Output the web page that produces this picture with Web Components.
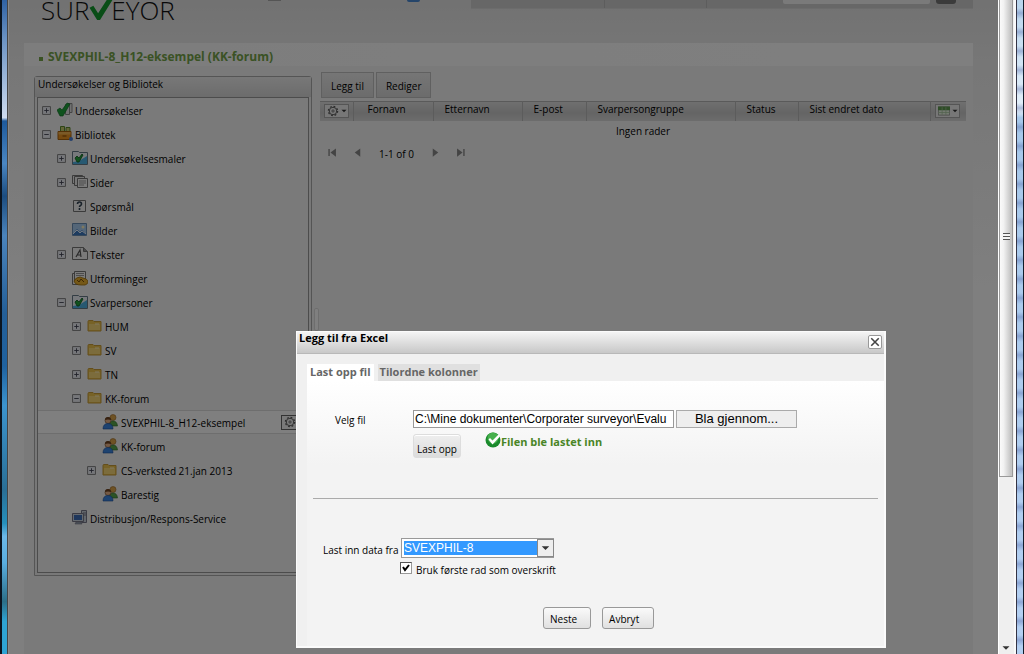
<!DOCTYPE html>
<html lang="no">
<head>
<meta charset="utf-8">
<title>Surveyor – Legg til fra Excel</title>
<style>
  html { background: #808080; }
  body {
    margin: 0;
    font: 10px/12px "Open Sans", "Noto Sans", sans-serif;
    color: #000;
  }
</style>
</head>
<body>
<window-frame>
  <survey-page>
    <brand-header slot="header"></brand-header>
    <page-title slot="title">SVEXPHIL-8_H12-eksempel (KK-forum)</page-title>
    <library-panel slot="side" heading="Undersøkelser og Bibliotek">
      <tree-item depth="0" state="closed" icon="surveys">Undersøkelser</tree-item>
      <tree-item depth="0" state="open" icon="library">Bibliotek</tree-item>
      <tree-item depth="1" state="closed" icon="template">Undersøkelsesmaler</tree-item>
      <tree-item depth="1" state="closed" icon="pages">Sider</tree-item>
      <tree-item depth="1" icon="question">Spørsmål</tree-item>
      <tree-item depth="1" icon="image">Bilder</tree-item>
      <tree-item depth="1" state="closed" icon="text">Tekster</tree-item>
      <tree-item depth="1" icon="design">Utforminger</tree-item>
      <tree-item depth="1" state="open" icon="template">Svarpersoner</tree-item>
      <tree-item depth="2" state="closed" icon="folder">HUM</tree-item>
      <tree-item depth="2" state="closed" icon="folder">SV</tree-item>
      <tree-item depth="2" state="closed" icon="folder">TN</tree-item>
      <tree-item depth="2" state="open" icon="folder">KK-forum</tree-item>
      <tree-item depth="3" icon="people" selected>SVEXPHIL-8_H12-eksempel</tree-item>
      <tree-item depth="3" icon="people">KK-forum</tree-item>
      <tree-item depth="3" state="closed" icon="folder">CS-verksted 21.jan 2013</tree-item>
      <tree-item depth="3" icon="people">Barestig</tree-item>
      <tree-item depth="1" icon="server">Distribusjon/Respons-Service</tree-item>
    </library-panel>
    <respondent-list slot="main"></respondent-list>
    <import-dialog slot="dialog" heading="Legg til fra Excel"></import-dialog>
  </survey-page>
</window-frame>

<script>
const define = (tag, html, setup) => {
  const template = document.createElement('template');
  template.innerHTML = '<style>:host{display:block;box-sizing:border-box}*{box-sizing:border-box}button,input,select{font:inherit;color:inherit;margin:0}</style>' + html;
  customElements.define(tag, class extends HTMLElement {
    constructor() {
      super();
      this.attachShadow({ mode: 'open' }).append(template.content.cloneNode(true));
    }
    connectedCallback() { if (setup) setup(this, this.shadowRoot); }
  });
};

const icons = {
  surveys: '<path d="M8.500 2.500h4v10h-4zM11 1.500h4v9h-2" fill="#e4e4e4" stroke="#888"/><path d="M0 8l3-2 2 2 5-7 3 1-7 12H3z" fill="#1fa53a" stroke="#0a6420" stroke-width=".6"/>',
  library: '<path d="M3.500 .5h4v5h-4zM9 1.500h4v5H9z" fill="#c8cc70" stroke="#5c8a2c"/><path d="M1 5.500h13v8H1z" fill="#ec9420" stroke="#a8620c"/><path d="M1.500 6h12v2.500h-12z" fill="#f7b44e"/><path d="M5.500 10h4" stroke="#804500"/><circle cx="14" cy="13" r="2" fill="#4a80d8"/>',
  template: '<path d="M.5 1.500h6l1 1h8v12H.5z" fill="#eef3f8" stroke="#667a88"/><path d="M1 14v-2l6-1 8-5v8z" fill="#4eb2e4"/><path d="M3 8l2-2 2 2 3-4 1 1-4 7H5z" fill="#22a23a" stroke="#0c5a1e" stroke-width=".8"/>',
  pages: '<path d="M.5 1.500h10v8H.5z" fill="#eee" stroke="#777"/><path d="M2.500 2.500h10v9h-10z" fill="#eee" stroke="#777"/><path d="M5.500 4.500h10v9h-10z" fill="#f4f4f4" stroke="#777"/><path d="M7 7h7M7 9h7M7 11h5" stroke="#999"/>',
  question: '<path d="M1.500 2.500h12v11h-12z" fill="#f4f4f4" stroke="#777"/><path d="M5.500 6q0-2 2-2t2 2q0 1-1 1.500t-1 1.500M7.500 10v2" fill="none" stroke="#345" stroke-width="1.600"/>',
  image: '<path d="M.5 1.500h14v12H.5z" fill="#a8cdf0" stroke="#6b8fb4"/><path d="M1 12l4-5 3 3 2-2 4 4v1H1z" fill="#3d78c0"/><path d="M1 12l4-4 3 3 2-2 4 3" fill="none" stroke="#e8f2ff"/><circle cx="11" cy="5" r="1.500" fill="#fff3c0"/>',
  text: '<path d="M.5 1.500h11l4 4v8H.5z" fill="#f4f4f4" stroke="#777"/><path d="M11.500 1.500v4h4" fill="#999" stroke="#777"/><path d="M4 11l4-7 1 7M5.500 9H9" fill="none" stroke="#555" stroke-width="1.200"/>',
  design: '<path d="M.5 3.500h10v11H.5z" fill="#f0f0f0" stroke="#777"/><path d="M2.500 1.500h11v10h-11z" fill="#f6f6f6" stroke="#777"/><path d="M4 3.500h8M4 5.500h8" stroke="#999"/><path d="M2 11q2-4 6-4l6 2q2 1 2 3t-3 3H9q-6 0-7-4z" fill="#eab02e" stroke="#a0700c" stroke-width=".8"/><path d="M5 10l2 2 2-3 3 3" fill="none" stroke="#7a4d08"/>',
  folder: '<path d="M1 3.500q0-1 1-1h4l1 1h7v9.500H1z" fill="#efc44e" stroke="#c89c38"/><path d="M2 6h11v6H2z" fill="#f8d878"/><path d="M8 6h4" stroke="#fff2c4"/>',
  people: '<circle cx="11" cy="3.500" r="3" fill="#dca448" stroke="#9c6a28" stroke-width=".6"/><path d="M7 12q0-5 4-5t4.500 5z" fill="#58a64a" stroke="#2f6f28" stroke-width=".6"/><circle cx="6" cy="6.500" r="3" fill="#e8b48a" stroke="#6d4320" stroke-width=".6"/><path d="M3 6q0-3 3-3t3 3q-3-1-6 0z" fill="#6d4320"/><path d="M1 15q0-5.500 5-5.500t5 5.500z" fill="#3c86e0" stroke="#1c4f9c" stroke-width=".6"/>',
  server: '<path d="M9.500 .5h5v12h-5z" fill="#c6ced8" stroke="#778"/><path d="M11 3h3M11 5h3" stroke="#778"/><path d="M.5 3.500h11v8H.5z" fill="#c8d2de" stroke="#778"/><path d="M2 5h8v5H2z" fill="#3f6eb8"/><path d="M3 14h7l-1-2H4z" fill="#99a4b4" stroke="#778" stroke-width=".6"/>',
  gear: '<circle cx="8" cy="8" r="5" fill="none" stroke="#555" stroke-width="1.200"/><circle cx="8" cy="8" r="6.200" fill="none" stroke="#555" stroke-width="1.600" stroke-dasharray="2.400 2.470"/><circle cx="8" cy="8" r="1.500" fill="none" stroke="#555"/>',
  grid: '<path d="M.5 2.500h15v11H.5z" fill="#e8f4e2" stroke="#888"/><path d="M0 2h16v5H0z" fill="#5f9a50"/><path d="M0 10h16M5.500 3v10M10.500 3v10" stroke="#a4c49c"/>',
  caret: '<path d="M4 6h8l-4 4z" fill="#333"/>',
  first: '<path d="M3 3v10" stroke="#888" stroke-width="2"/><path d="M13 2v12L5 8z" fill="#888"/>',
  prev: '<path d="M12 2v12L4 8z" fill="#888"/>',
  next: '<path d="M4 2v12l8-6z" fill="#888"/>',
  last: '<path d="M13 3v10" stroke="#888" stroke-width="2"/><path d="M3 2v12l8-6z" fill="#888"/>',
  close: '<path d="M2 2l12 12M14 2L2 14" stroke="#444" stroke-width="2.500"/>',
  ok: '<circle cx="8" cy="8" r="7.500" fill="#1a8a2c"/><circle cx="8" cy="6" r="5.500" fill="#46b04c"/><path d="M3.500 7.500l1.500-1.500 2.500 2.500 6-6 1.500 2-7.500 8z" fill="#fff"/>',
  plus: '<path d="M1 1h14v14H1z" fill="#eceff4" stroke="#777" stroke-width="1.600"/><path d="M4 8h8M8 4v8" stroke="#445" stroke-width="1.600"/>',
  minus: '<path d="M1 1h14v14H1z" fill="#eceff4" stroke="#777" stroke-width="1.600"/><path d="M4 8h8" stroke="#445" stroke-width="1.600"/>'
};

define('ui-icon', `
  <style>:host{display:inline-block;width:16px;height:16px;flex:none}svg{display:block;width:100%;height:100%}</style>
  <svg viewBox="0 0 16 16" aria-hidden="true"></svg>`,
  (host, root) => { root.querySelector('svg').innerHTML = icons[host.getAttribute('name')] || ''; });

define('window-frame', `
  <style>
    :host{display:flex;height:100vh;overflow:hidden}
    .left{flex:none;width:9px;border-left:2px solid #0a1420;border-right:1px solid #888;
      background:linear-gradient(90deg,transparent 5px,#444 5px),
      linear-gradient(#2f62a4,#6b93c4 6%,#c6d6ec 17%,#cfdcf0 18%,#1e5a9c 18.500%,#4a86c2 25%,#1c4d80 30%,#4b84bc 36%,#245f98 48%,#1f62a0 56%,#3c94ce 62%,#2a6f96 75%,#2690bc 80%,#6cb8e8 82%,#5aaee0 86%,#2c6f88 92%,#2fa4d4 95%)}
    main{flex:1;min-width:0}
    .bar{flex:none;width:18px;background:#efefef;border-left:1px solid #fff;border-right:2px solid #fafafa;display:flex;flex-direction:column;justify-content:space-between}
    .thumb{height:73%;border:1px solid #999;border-top:0;margin-right:1px;padding-bottom:4px;background:linear-gradient(90deg,#fafafa,#f2f2f2 30%,#c4c4c4 90%);display:flex;align-items:center;justify-content:center}
    .grip{width:7px;height:7px;background:repeating-linear-gradient(#555 0 1px,#f4f4f4 1px 3px)}
    .bar ui-icon{width:14px;height:14px;margin-bottom:-1px}
    .right{flex:none;width:8px;border-left:1px solid #334;border-right:1px solid #101c28;
      background:repeating-linear-gradient(transparent 0 8px,rgba(70,90,160,.35) 13px,transparent 19px),linear-gradient(#b8d4ec,#e4f0fa 17%,#a6c8ea 18%,#b4d0f2)}
  </style>
  <div class="left"></div>
  <main><slot></slot></main>
  <div class="bar"><div class="thumb"><div class="grip"></div></div><ui-icon name="caret"></ui-icon></div>
  <div class="right"></div>`);

define('survey-page', `
  <style>
    :host{position:relative;height:100%;overflow:hidden;padding:0 25px 0 15px;background:linear-gradient(#e4e4e4,#eee 60px,#fff 300px)}
    .sheet{display:flex;flex-direction:column;height:100%}
    .body{flex:1;display:flex;gap:2px;background:#f4f4f4;padding:6px 7px 0 10px}
    .side{flex:none;width:278px;padding-top:4px}
    .split{flex:none;align-self:flex-start;width:5px;height:23px;margin-top:236px;border:1px solid #ddd;border-radius:2px;background:#fff}
    .main{flex:1;min-width:0}
    .shade{position:absolute;inset:0;background:rgba(0,0,0,.5)}
    .dialog{position:absolute;left:287px;right:112px;bottom:6px}
  </style>
  <div class="sheet">
    <slot name="header"></slot>
    <slot name="title"></slot>
    <div class="body">
      <div class="side"><slot name="side"></slot></div>
      <div class="split"></div>
      <div class="main"><slot name="main"></slot></div>
    </div>
  </div>
  <div class="shade"></div>
  <div class="dialog"><slot name="dialog"></slot></div>`);

define('brand-header', `
  <style>
    :host{display:flex;align-items:flex-start;flex:none;height:43px;padding-left:17px}
    .logo{display:flex;align-items:flex-start;flex:none;margin-right:auto;font-size:26px;line-height:20px;font-weight:300;color:#111}
    .logo svg{width:25px;height:21px;margin:0 -2px 0 -1px}
    .marks{display:flex;gap:126px;flex:none;width:171px;margin-right:32px}
    .marks i{width:13px;height:1px;background:#aaa}
    .marks i+i{background:#4a8ad4;height:2px;border-radius:0 0 5px 5px}
    nav{display:flex;justify-content:flex-end;gap:6px;width:502px;height:9px;padding-right:17px;background:#cfcfcf;border-bottom:1px solid #d8d8d8}
    input{width:147px;height:4px;padding:0;border:0;background:#f4f4f4;border-radius:0 0 2px 2px}
    button{width:20px;height:4px;padding:0;border:0;background:#777;border-radius:0 0 3px 3px}
    .sep{width:1px;background:#bbb;margin-right:95px}
    .sep+.sep{margin-right:70px}
  </style>
  <div class="logo"><span>SUR</span><svg viewBox="0 0 25 22" aria-hidden="true"><path d="M1 8l4-2 5 8L19 0h6L12 21H9z" fill="#129a2c"/></svg><span>EYOR</span></div>
  <div class="marks"><i></i><i></i></div>
  <nav><span class="sep"></span><span class="sep"></span><input aria-label="Søk"><button aria-label="Søk"></button></nav>`);

define('page-title', `
  <style>
    :host{flex:none;background:linear-gradient(90deg,#fafafa,#fff)}
    h1{display:flex;align-items:center;gap:5px;height:23px;margin:0;padding:4px 0 0 15px;font-size:12px;line-height:16px;font-weight:700;color:#74a448}
    i{width:4px;height:4px;margin-top:4px;background:#74a448}
  </style>
  <h1><i></i><span><slot></slot></span></h1>`);

define('library-panel', `
  <style>
    section{border:1px solid #aaa;border-radius:3px 3px 0 0;padding:0 2px 2px;background:#f0f0f0}
    h2{margin:0 -2px;padding:0 3px;height:20px;font-size:10px;line-height:14px;font-weight:400;background:linear-gradient(#f0f0f0,#d8d8d8)}
    .tree{border:1px solid #999;height:476px;background:#f4f4f4}
  </style>
  <section><h2></h2><div class="tree" role="tree"><slot></slot></div></section>`,
  (host, root) => { root.querySelector('h2').textContent = host.getAttribute('heading'); });

define('tree-item', `
  <style>
    .row{display:flex;align-items:center;height:24px;padding-left:calc(4px + var(--depth) * 15px)}
    :host([selected]) .row{background:#fff;box-shadow:inset 0 1px #ddd,inset 0 -1px #ddd}
    .toggle{width:9px;height:9px;padding:0;border:0;background:none;margin-right:6px}
    .toggle ui-icon{display:block;width:9px;height:9px}
    .label{margin-left:2px;padding-top:2px;white-space:nowrap}
    :host([depth="3"]) .label{margin-left:3px}
    .menu{display:none;margin:0 3px 0 auto;width:24px;height:15px;padding:0;border:1px solid #666;background:#f4f4f4;align-items:center}
    .menu ui-icon{width:12px;height:12px;margin-left:2px}
    :host([selected]) .menu{display:flex}
  </style>
  <div class="row"><button class="toggle" aria-label="Vis"></button><ui-icon class="pic"></ui-icon><span class="label"><slot></slot></span><button class="menu" aria-label="Handlinger"><ui-icon name="gear"></ui-icon></button></div>`,
  (host, root) => {
    host.setAttribute('role', 'treeitem');
    root.querySelector('.row').style.setProperty('--depth', host.getAttribute('depth'));
    const pic = document.createElement('ui-icon');
    pic.setAttribute('name', host.getAttribute('icon'));
    root.querySelector('.pic').replaceWith(pic);
    const toggle = root.querySelector('.toggle');
    const state = host.getAttribute('state');
    if (state) {
      const sign = document.createElement('ui-icon');
      sign.setAttribute('name', state === 'open' ? 'minus' : 'plus');
      toggle.append(sign);
    } else {
      toggle.style.visibility = 'hidden';
    }
  });

define('respondent-list', `
  <style>
    :host{margin-left:-1px}
    .tools{display:flex;gap:2px;padding-left:1px;margin-bottom:3px}
    .tools button{height:26px;padding:2px 9px 0;border:1px solid #c0c0c0;background:linear-gradient(#ececec,#d8d8d8)}
    table{width:100%;border-collapse:collapse;table-layout:fixed}
    thead tr{height:20px;background:linear-gradient(#e2e2e2,#cacaca 60%,#dadada);box-shadow:inset 0 1px #b4b4b4}
    th{padding:0 0 4px 11px;font-weight:400;text-align:left;white-space:nowrap;border-right:1px solid #b8b8b8}
    th:last-child{border-right:0}
    th:nth-child(2){padding-left:14px}
    th.act{padding:0 0 0 4px}
    .act button{display:flex;align-items:center;width:25px;height:14px;padding:0 2px;border:1px solid #aaa;background:#eee}
    .act ui-icon{width:12px;height:12px}
    .act ui-icon+ui-icon{width:10px;height:10px;margin-right:-2px}
    td{height:20px;padding:0;text-align:center}
    .pager{display:flex;align-items:center;height:22px;padding-left:6px}
    .pager button{width:14px;height:14px;padding:1px;border:0;background:none}
    .pager ui-icon{display:block;width:11px;height:11px}
    .pager button+button{margin-left:11px}
    .pager span{padding:4px 15px 0 14px}
  </style>
  <div class="tools"><button>Legg til</button><button>Rediger</button></div>
  <table>
    <colgroup><col style="width:33px"><col style="width:80px"><col style="width:89px"><col style="width:64px"><col><col style="width:63px"><col style="width:132px"><col style="width:36px"></colgroup>
    <thead><tr>
      <th class="act"><button aria-label="Handlinger"><ui-icon name="gear"></ui-icon><ui-icon name="caret"></ui-icon></button></th>
      <th>Fornavn</th><th>Etternavn</th><th>E-post</th><th>Svarpersongruppe</th><th>Status</th><th>Sist endret dato</th>
      <th class="act"><button aria-label="Kolonner"><ui-icon name="grid"></ui-icon><ui-icon name="caret"></ui-icon></button></th>
    </tr></thead>
    <tbody><tr><td colspan="8">Ingen rader</td></tr></tbody>
  </table>
  <div class="pager">
    <button aria-label="Første"><ui-icon name="first"></ui-icon></button><button aria-label="Forrige"><ui-icon name="prev"></ui-icon></button>
    <span>1-1 of 0</span>
    <button aria-label="Neste side"><ui-icon name="next"></ui-icon></button><button aria-label="Siste"><ui-icon name="last"></ui-icon></button>
  </div>`);

define('import-dialog', `
  <style>
    section{background:#f0f0f0;border:solid #fbfbfb;border-width:1px 2px 2px 1px}
    header{display:flex;justify-content:space-between;height:22px;padding:0 2px;background:linear-gradient(#f4f4f4,#c8c8c8);border-bottom:1px solid #b8b8b8}
    h2{margin:0;font-size:11px;line-height:12px;font-weight:700}
    .close{width:14px;height:14px;margin-top:3px;padding:1px;border:1px solid #999;border-radius:2px;background:#fff}
    .close ui-icon{display:block;width:10px;height:10px}
    .tabs{display:flex;gap:4px;padding:10px 0 0 10px;height:27px}
    .tabs button{padding:0 2px 2px;border:0;background:#e0e0e0;color:#666;font-size:11px;line-height:14px;font-weight:700}
    .tabs button[aria-selected=true]{padding:0 3px 2px;background:#fff}
    form{margin-left:10px;height:265px;padding:29px 6px 0;background:linear-gradient(#fff,#f3f3f3 84px)}
    .file{display:flex;align-items:center;gap:2px}
    .file label{width:98px;padding:2px 0 0 22px}
    .file input{width:261px;height:18px;padding:0 1px;border:1px solid #999;background:#fff;font:12px/16px "Liberation Sans",sans-serif}
    .file button{width:121px;height:18px;padding:0;border:1px solid #aaa;background:#eee;font:13px/16px "Liberation Sans",sans-serif}
    .upload{display:flex;gap:24px;padding:6px 0 0 100px}
    .soft{height:24px;padding:6px 3px 0;border:1px solid #ddd;border-radius:3px;background:linear-gradient(#eee,#dcdcdc);box-shadow:inset 0 1px #fff}
    output{display:flex;height:16px;color:#4a8526;font-size:11px;line-height:16px;font-weight:700}
    output ui-icon{margin-top:-2px}
    hr{margin:40px 0 39px;border:0;height:1px;background:#aaa}
    .source{display:flex;align-items:center;padding-left:10px}
    .source label{width:78px;padding-top:4px}
    .pick{position:relative;width:153px;height:20px}
    select{appearance:none;width:100%;height:100%;padding:0 18px 0 2px;border:1px solid #999;border-radius:0;outline:2px solid #fff;outline-offset:-3px;background:#39f;color:#fff;font:12px/16px "Liberation Sans",sans-serif}
    .arrow{position:absolute;right:0;top:1px;width:17px;height:18px;border:1px solid #888;background:#eee;pointer-events:none}
    .arrow ui-icon{width:15px;height:16px}
    .first{display:flex;align-items:center;gap:4px;margin:2px 0 0 87px}
    .first input{appearance:none;width:12px;height:12px;border:1px solid #999;border-top-color:#555;border-left-color:#555;background:#fff}
    .box{position:relative;display:flex}
    .box svg{position:absolute;inset:0;width:12px;height:12px;pointer-events:none;visibility:hidden}
    input:checked+svg{visibility:visible}
    .first label{padding-top:4px}
    .actions{display:flex;gap:11px;margin:31px 0 0 230px}
    .actions button{height:22px;padding:2px 13px 0 6px;border:1px solid #999;border-radius:3px;background:linear-gradient(#fafafa,#e0e0e0)}
    .actions button+button{padding-right:14px}
  </style>
  <section role="dialog" aria-label="Legg til fra Excel">
    <header><h2></h2><button class="close" aria-label="Lukk"><ui-icon name="close"></ui-icon></button></header>
    <div class="tabs" role="tablist"><button role="tab" aria-selected="true">Last opp fil</button><button role="tab" aria-selected="false">Tilordne kolonner</button></div>
    <form>
      <div class="file"><label for="path">Velg fil</label><input id="path" type="text" value="C:\\Mine dokumenter\\Corporater surveyor\\Evalu"><button type="button">Bla gjennom...</button></div>
      <div class="upload"><button type="button" class="soft">Last opp</button><output><ui-icon name="ok"></ui-icon>Filen ble lastet inn</output></div>
      <hr>
      <div class="source"><label for="sheet">Last inn data fra</label><div class="pick"><select id="sheet"><option>SVEXPHIL-8</option></select><div class="arrow"><ui-icon name="caret"></ui-icon></div></div></div>
      <div class="first"><span class="box"><input id="head" type="checkbox" checked><svg viewBox="0 0 12 12" aria-hidden="true"><path d="M3 5l2 3 4-5" fill="none" stroke="#000" stroke-width="2"/></svg></span><label for="head">Bruk første rad som overskrift</label></div>
      <div class="actions"><button type="button">Neste</button><button type="button">Avbryt</button></div>
    </form>
  </section>`,
  (host, root) => { root.querySelector('h2').textContent = host.getAttribute('heading'); });
</script>
</body>
</html>
